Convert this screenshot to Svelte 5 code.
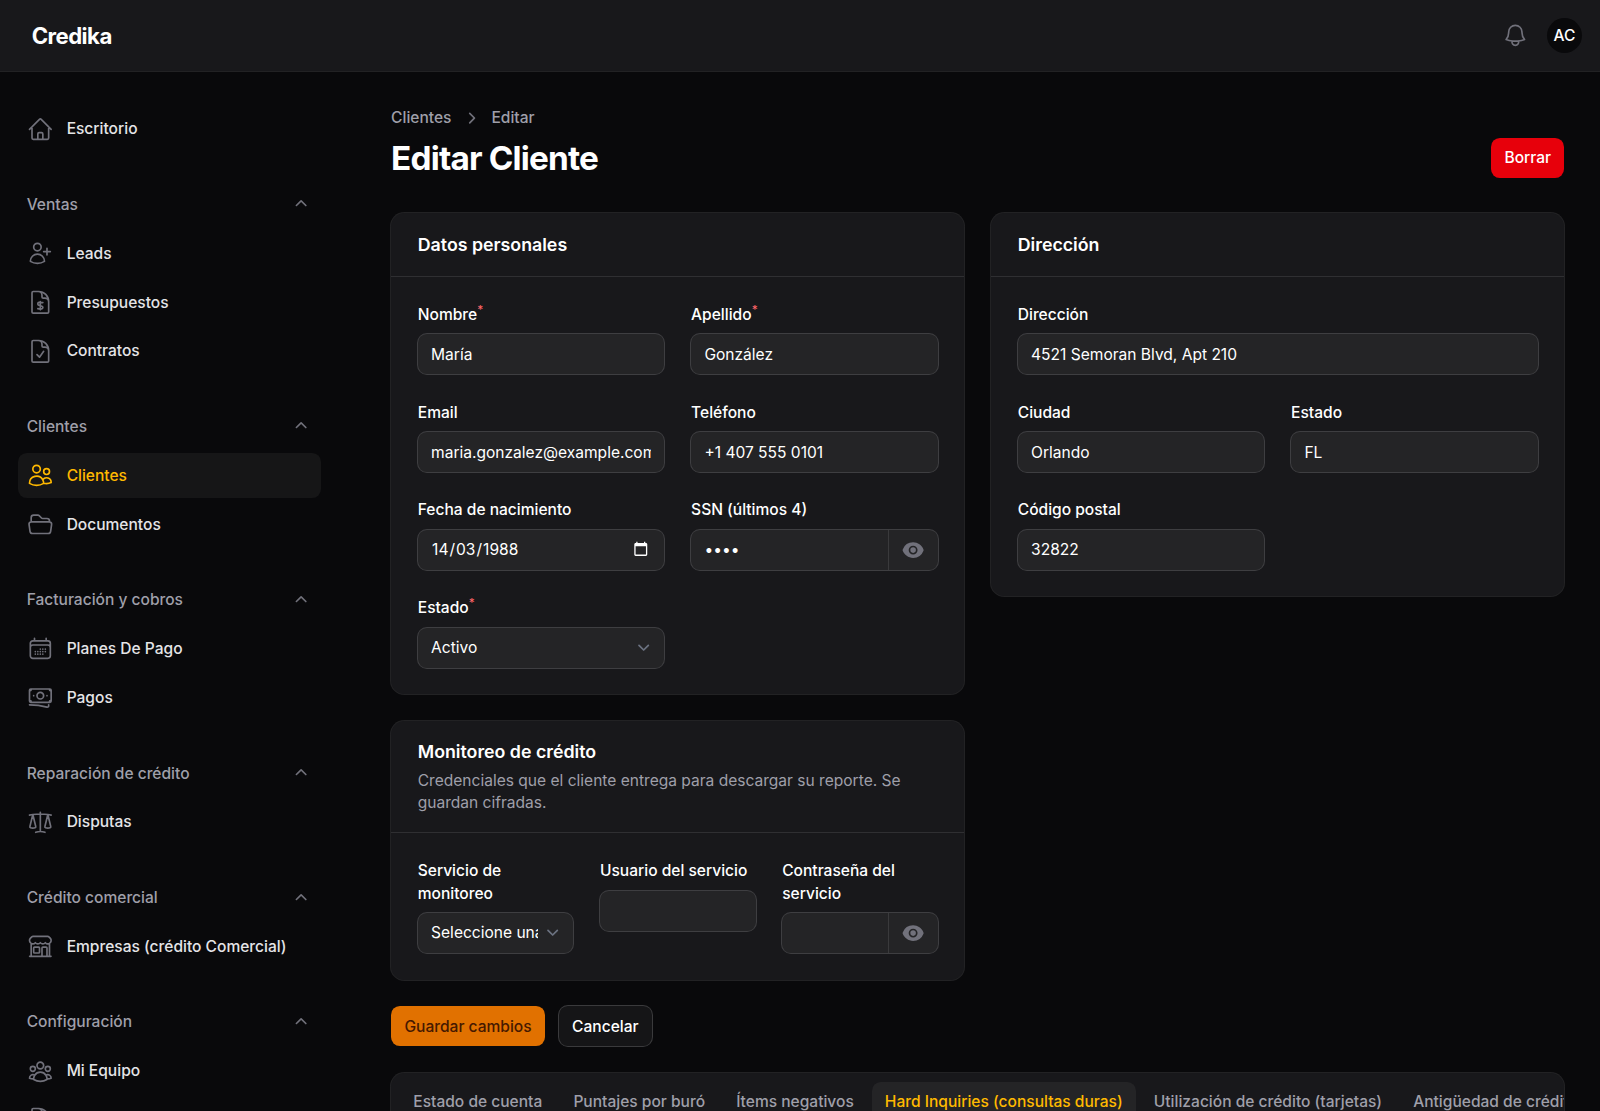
<script lang="ts">
  type Item = { label: string; icon: string; active?: boolean };
  type Group = { label?: string; items: Item[] };

  // Outline icons on a 24x24 grid
  const icons: Record<string, string> = {
    home: 'm2.25 12 8.954-8.955c.44-.439 1.152-.439 1.591 0L21.75 12M4.5 9.75v10.125c0 .621.504 1.125 1.125 1.125H9.75v-4.875c0-.621.504-1.125 1.125-1.125h2.25c.621 0 1.125.504 1.125 1.125V21h4.125c.621 0 1.125-.504 1.125-1.125V9.75M8.25 21h8.25',
    userPlus: 'M18 7.5v3m0 0v3m0-3h3m-3 0h-3m-2.25-4.125a3.375 3.375 0 1 1-6.75 0 3.375 3.375 0 0 1 6.75 0ZM3 19.235v-.11a6.375 6.375 0 0 1 12.75 0v.109A12.318 12.318 0 0 1 9.374 21c-2.331 0-4.512-.645-6.374-1.766Z',
    docDollar: 'M10.125 2.25h-4.5c-.621 0-1.125.504-1.125 1.125v17.25c0 .621.504 1.125 1.125 1.125h12.75c.621 0 1.125-.504 1.125-1.125v-9M10.125 2.25h.375a9 9 0 0 1 9 9v.375M10.125 2.25A3.375 3.375 0 0 1 13.5 5.625v1.5c0 .621.504 1.125 1.125 1.125h1.5a3.375 3.375 0 0 1 3.375 3.375M12 11.25v7.5m2.25-6.466a9.016 9.016 0 0 0-3.461-.203c-.536.072-.974.478-1.021 1.017a4.559 4.559 0 0 0-.018.402c0 .464.336.844.775.994l2.95 1.012c.44.15.775.53.775.994 0 .136-.006.27-.018.402-.047.539-.485.945-1.021 1.017a9.077 9.077 0 0 1-3.461-.203',
    docCheck: 'M10.125 2.25h-4.5c-.621 0-1.125.504-1.125 1.125v17.25c0 .621.504 1.125 1.125 1.125h12.75c.621 0 1.125-.504 1.125-1.125v-9M10.125 2.25h.375a9 9 0 0 1 9 9v.375M10.125 2.25A3.375 3.375 0 0 1 13.5 5.625v1.5c0 .621.504 1.125 1.125 1.125h1.5a3.375 3.375 0 0 1 3.375 3.375M9 15l2.25 2.25L15 12',
    docText: 'M19.5 14.25v-2.625a3.375 3.375 0 0 0-3.375-3.375h-1.5A1.125 1.125 0 0 1 13.5 7.125v-1.5a3.375 3.375 0 0 0-3.375-3.375H8.25m0 12.75h7.5m-7.5 3H12M10.5 2.25H5.625c-.621 0-1.125.504-1.125 1.125v17.25c0 .621.504 1.125 1.125 1.125h12.75c.621 0 1.125-.504 1.125-1.125V11.25a9 9 0 0 0-9-9Z',
    users: 'M15 19.128a9.38 9.38 0 0 0 2.625.372 9.337 9.337 0 0 0 4.121-.952 4.125 4.125 0 0 0-7.533-2.493M15 19.128v-.003c0-1.113-.285-2.16-.786-3.07M15 19.128v.106A12.318 12.318 0 0 1 8.624 21c-2.331 0-4.512-.645-6.374-1.766l-.001-.109a6.375 6.375 0 0 1 11.964-3.07M12 6.375a3.375 3.375 0 1 1-6.75 0 3.375 3.375 0 0 1 6.75 0Zm8.25 2.25a2.625 2.625 0 1 1-5.25 0 2.625 2.625 0 0 1 5.25 0Z',
    folder: 'M3.75 9.776c.112-.017.227-.026.344-.026h15.812c.117 0 .232.009.344.026m-16.5 0a2.25 2.25 0 0 0-1.883 2.542l.857 6a2.25 2.25 0 0 0 2.227 1.932H19.05a2.25 2.25 0 0 0 2.227-1.932l.857-6a2.25 2.25 0 0 0-1.883-2.542m-16.5 0V6A2.25 2.25 0 0 1 6 3.75h3.879a1.5 1.5 0 0 1 1.06.44l2.122 2.12a1.5 1.5 0 0 0 1.06.44H18A2.25 2.25 0 0 1 20.25 9v.776',
    calendar: 'M6.75 3v2.25M17.25 3v2.25M3 18.75V7.5a2.25 2.25 0 0 1 2.25-2.25h13.5A2.25 2.25 0 0 1 21 7.5v11.25m-18 0A2.25 2.25 0 0 0 5.25 21h13.5A2.25 2.25 0 0 0 21 18.75m-18 0v-7.5A2.25 2.25 0 0 1 5.25 9h13.5A2.25 2.25 0 0 1 21 11.25v7.5m-9-6h.008v.008H12v-.008ZM12 15h.008v.008H12V15Zm0 2.25h.008v.008H12v-.008ZM9.75 15h.008v.008H9.75V15Zm0 2.25h.008v.008H9.75v-.008ZM7.5 15h.008v.008H7.5V15Zm0 2.25h.008v.008H7.5v-.008Zm6.75-4.5h.008v.008h-.008v-.008Zm0 2.25h.008v.008h-.008V15Zm0 2.25h.008v.008h-.008v-.008Zm2.25-4.5h.008v.008H16.5v-.008Zm0 2.25h.008v.008H16.5V15Z',
    cash: 'M2.25 18.75a60.07 60.07 0 0 1 15.797 2.101c.727.198 1.453-.342 1.453-1.096V18.75M3.75 4.5v.75A.75.75 0 0 1 3 6h-.75m0 0v-.375c0-.621.504-1.125 1.125-1.125H20.25M2.25 6v9m18-10.5v.75c0 .414.336.75.75.75h.75m-1.5-1.5h.375c.621 0 1.125.504 1.125 1.125v9.75c0 .621-.504 1.125-1.125 1.125h-.375m1.5-1.5H21a.75.75 0 0 0-.75.75v.75m0 0H3.75m0 0h-.375a1.125 1.125 0 0 1-1.125-1.125V15m1.5 1.5v-.75A.75.75 0 0 0 3 15h-.75M15 10.5a3 3 0 1 1-6 0 3 3 0 0 1 6 0Zm3 0h.008v.008H18V10.5Zm-12 0h.008v.008H6V10.5Z',
    scale: 'M12 3v17.25m0 0c-1.472 0-2.882.265-4.185.75M12 20.25c1.472 0 2.882.265 4.185.75M18.75 4.97A48.416 48.416 0 0 0 12 4.5c-2.291 0-4.545.16-6.75.47m13.5 0c1.01.143 2.01.317 3 .52m-3-.52 2.62 10.726c.122.499-.106 1.028-.589 1.202a5.988 5.988 0 0 1-2.031.352 5.988 5.988 0 0 1-2.031-.352c-.483-.174-.711-.703-.59-1.202L18.75 4.971Zm-16.5.52c.99-.203 1.99-.377 3-.52m0 0 2.62 10.726c.122.499-.106 1.028-.589 1.202a5.989 5.989 0 0 1-2.031.352 5.989 5.989 0 0 1-2.031-.352c-.483-.174-.711-.703-.59-1.202L5.25 4.971Z',
    store: 'M13.5 21v-7.5a.75.75 0 0 1 .75-.75h3a.75.75 0 0 1 .75.75V21m-4.5 0H2.36m11.14 0H18m0 0h3.64m-1.39 0V9.349M3.75 21V9.349m0 0a3.001 3.001 0 0 0 3.75-.615A2.993 2.993 0 0 0 9.75 9.75c.896 0 1.7-.393 2.25-1.016a2.993 2.993 0 0 0 2.25 1.016c.896 0 1.7-.393 2.25-1.015a3.001 3.001 0 0 0 3.75.614m-16.5 0a3.004 3.004 0 0 1-.621-4.72l1.189-1.19A1.5 1.5 0 0 1 5.378 3h13.243a1.5 1.5 0 0 1 1.06.44l1.19 1.189a3 3 0 0 1-.621 4.72M6.75 18h3.75a.75.75 0 0 0 .75-.75V13.5a.75.75 0 0 0-.75-.75H6.75a.75.75 0 0 0-.75.75v3.75c0 .414.336.75.75.75Z',
    team: 'M18 18.72a9.094 9.094 0 0 0 3.741-.479 3 3 0 0 0-4.682-2.72m.94 3.198.001.031c0 .225-.012.447-.037.666A11.944 11.944 0 0 1 12 21c-2.17 0-4.207-.576-5.963-1.584A6.062 6.062 0 0 1 6 18.719m12 0a5.971 5.971 0 0 0-.941-3.197m0 0A5.995 5.995 0 0 0 12 12.75a5.995 5.995 0 0 0-5.058 2.772m0 0a3 3 0 0 0-4.681 2.72 8.986 8.986 0 0 0 3.74.477m.94-3.197a5.971 5.971 0 0 0-.94 3.197M15 6.75a3 3 0 1 1-6 0 3 3 0 0 1 6 0Zm6 3a2.25 2.25 0 1 1-4.5 0 2.25 2.25 0 0 1 4.5 0Zm-13.5 0a2.25 2.25 0 1 1-4.5 0 2.25 2.25 0 0 1 4.5 0Z',
    bell: 'M14.857 17.082a23.848 23.848 0 0 0 5.454-1.31A8.967 8.967 0 0 1 18 9.75V9A6 6 0 0 0 6 9v.75a8.967 8.967 0 0 1-2.312 6.022c1.733.64 3.56 1.085 5.455 1.31m5.714 0a24.255 24.255 0 0 1-5.714 0m5.714 0a3 3 0 1 1-5.714 0'
  };

  const nav: Group[] = [
    { items: [{ label: 'Escritorio', icon: 'home' }] },
    {
      label: 'Ventas',
      items: [
        { label: 'Leads', icon: 'userPlus' },
        { label: 'Presupuestos', icon: 'docDollar' },
        { label: 'Contratos', icon: 'docCheck' }
      ]
    },
    {
      label: 'Clientes',
      items: [
        { label: 'Clientes', icon: 'users', active: true },
        { label: 'Documentos', icon: 'folder' }
      ]
    },
    {
      label: 'Facturación y cobros',
      items: [
        { label: 'Planes De Pago', icon: 'calendar' },
        { label: 'Pagos', icon: 'cash' }
      ]
    },
    { label: 'Reparación de crédito', items: [{ label: 'Disputas', icon: 'scale' }] },
    { label: 'Crédito comercial', items: [{ label: 'Empresas (crédito Comercial)', icon: 'store' }] },
    {
      label: 'Configuración',
      items: [
        { label: 'Mi Equipo', icon: 'team' },
        { label: '', icon: 'docText' }
      ]
    }
  ];

  const tabs = [
    'Estado de cuenta',
    'Puntajes por buró',
    'Ítems negativos',
    'Hard Inquiries (consultas duras)',
    'Utilización de crédito (tarjetas)',
    'Antigüedad de crédito'
  ];
  let activeTab = $state(3);
</script>

{#snippet outline(name: string)}
  <svg class="icon" viewBox="0 0 24 24" fill="none" stroke="currentColor" stroke-width="1.5" stroke-linecap="round" stroke-linejoin="round" aria-hidden="true"><path d={icons[name]} /></svg>
{/snippet}

{#snippet text(label: string, value: string, required: boolean = false)}
  <label class="field">
    <span class="label">{label}{#if required}<sup>*</sup>{/if}</span>
    <span class="control"><input type="text" {value} /></span>
  </label>
{/snippet}

{#snippet secret(label: string, value: string)}
  <div class="field">
    <span class="label">{label}</span>
    <span class="control">
      <input type="password" {value} aria-label={label} />
      <button class="reveal" type="button" aria-label="Mostrar">
        <svg viewBox="0 0 20 20" fill="currentColor"><path d="M10 12.5a2.5 2.5 0 1 0 0-5 2.5 2.5 0 0 0 0 5Z" /><path fill-rule="evenodd" clip-rule="evenodd" d="M.664 10.59a1.651 1.651 0 0 1 0-1.186A10.004 10.004 0 0 1 10 3c4.257 0 7.893 2.66 9.336 6.41.147.381.146.804 0 1.186A10.004 10.004 0 0 1 10 17c-4.257 0-7.893-2.66-9.336-6.41ZM14 10a4 4 0 1 1-8 0 4 4 0 0 1 8 0Z" /></svg>
      </button>
    </span>
  </div>
{/snippet}

{#snippet choice(label: string, value: string, required: boolean = false)}
  <div class="field">
    <span class="label">{label}{#if required}<sup>*</sup>{/if}</span>
    <span class="control select">
      <span class="value">{value}</span>
      <svg viewBox="0 0 20 20" fill="none" stroke="#6b7280" stroke-width="1.5" stroke-linecap="round" stroke-linejoin="round"><path d="m6 8 4 4 4-4" /></svg>
    </span>
  </div>
{/snippet}

<div class="app">
  <header class="topbar">
    <div class="brand">Credika</div>
    <div class="tools">
      {@render outline('bell')}
      <div class="avatar">AC</div>
    </div>
  </header>

  <div class="body">
    <nav class="sidebar">
      {#each nav as group}
        <div class="group">
          {#if group.label}
            <div class="group-head">
              <span>{group.label}</span>
              <svg viewBox="0 0 20 20" fill="currentColor"><path d="M9.47 6.47a.75.75 0 0 1 1.06 0l4.25 4.25a.75.75 0 1 1-1.06 1.06L10 8.06l-3.72 3.72a.75.75 0 0 1-1.06-1.06l4.25-4.25Z" /></svg>
            </div>
          {/if}
          {#each group.items as item}
            <div class="item" class:active={item.active}>
              {@render outline(item.icon)}
              <span>{item.label}</span>
            </div>
          {/each}
        </div>
      {/each}
    </nav>

    <main>
      <div class="page-head">
        <div>
          <div class="crumbs">
            <span>Clientes</span>
            <svg viewBox="0 0 20 20" fill="currentColor"><path d="M8.22 5.22a.75.75 0 0 1 1.06 0l4.25 4.25a.75.75 0 0 1 0 1.06l-4.25 4.25a.75.75 0 0 1-1.06-1.06L11.94 10 8.22 6.28a.75.75 0 0 1 0-1.06Z" /></svg>
            <span>Editar</span>
          </div>
          <h1>Editar Cliente</h1>
        </div>
        <button class="btn danger" type="button">Borrar</button>
      </div>

      <form>
        <div class="cards">
          <section class="card">
            <header><h2>Datos personales</h2></header>
            <div class="fields two">
              {@render text('Nombre', 'María', true)}
              {@render text('Apellido', 'González', true)}
              {@render text('Email', 'maria.gonzalez@example.com')}
              {@render text('Teléfono', '+1 407 555 0101')}
              <div class="field">
                <span class="label">Fecha de nacimiento</span>
                <span class="control date">
                  <span class="parts"><span>14</span>/<span>03</span>/<span>1988</span></span>
                  <svg viewBox="0 0 24 24" fill="currentColor"><path d="M20 3h-1V1h-2v2H7V1H5v2H4c-1.1 0-2 .9-2 2v16c0 1.100.9 2 2 2h16c1.100 0 2-.9 2-2V5c0-1.100-.9-2-2-2zm0 18H4V8h16v13z" /></svg>
                </span>
              </div>
              {@render secret('SSN (últimos 4)', '1234')}
              {@render choice('Estado', 'Activo', true)}
            </div>
          </section>

          <section class="card">
            <header><h2>Dirección</h2></header>
            <div class="fields two">
              <div class="wide">{@render text('Dirección', '4521 Semoran Blvd, Apt 210')}</div>
              {@render text('Ciudad', 'Orlando')}
              {@render text('Estado', 'FL')}
              {@render text('Código postal', '32822')}
            </div>
          </section>

          <section class="card">
            <header>
              <h2>Monitoreo de crédito</h2>
              <p>Credenciales que el cliente entrega para descargar su reporte. Se guardan cifradas.</p>
            </header>
            <div class="fields three">
              {@render choice('Servicio de monitoreo', 'Seleccione una opción')}
              {@render text('Usuario del servicio', '')}
              {@render secret('Contraseña del servicio', '')}
            </div>
          </section>
        </div>

        <div class="actions">
          <button class="btn primary" type="button">Guardar cambios</button>
          <button class="btn plain" type="button">Cancelar</button>
        </div>
      </form>

      <div class="tabs">
        {#each tabs as tab, i}
          <button type="button" class:on={i === activeTab} onclick={() => (activeTab = i)}>{tab}</button>
        {/each}
      </div>
    </main>
  </div>
</div>

<style>
  :global(html) {
    font-size: 17.7778px;
  }
  :global(body) {
    margin: 0;
    background: #09090b;
    overflow: hidden;
  }
  .app,
  .app * {
    box-sizing: border-box;
  }
  .app {
    height: 100vh;
    overflow: hidden;
    display: flex;
    flex-direction: column;
    background: #09090b;
    color: #fff;
    font-family: Inter, 'Liberation Sans', sans-serif;
    font-size: 0.875rem;
    line-height: 1.25rem;
    -webkit-font-smoothing: antialiased;
  }
  svg {
    display: block;
    flex: none;
    width: 1.25rem;
    height: 1.25rem;
  }
  .icon {
    width: 1.5rem;
    height: 1.5rem;
    color: #71717b;
  }
  button,
  input {
    font: inherit;
    color: inherit;
    border: 0;
    margin: 0;
    background: none;
  }
  h1,
  h2,
  p {
    margin: 0;
  }

  .topbar {
    flex: none;
    height: 4rem;
    display: flex;
    align-items: center;
    justify-content: space-between;
    padding: 0 1rem 0 1.78rem;
    background: #18181b;
    box-shadow: 0 0 0 1px #222224;
  }
  .brand {
    padding-top: 1px;
    font-size: 1.25rem;
    line-height: 1.25rem;
    font-weight: 700;
    letter-spacing: -0.025em;
  }
  .tools {
    display: flex;
    align-items: center;
    gap: 1rem;
  }
  .avatar {
    width: 2rem;
    height: 2rem;
    padding-top: 1px;
    border-radius: 50%;
    background: #09090b;
    display: grid;
    place-items: center;
    font-weight: 500;
  }

  .body {
    flex: 1;
    min-height: 0;
    display: flex;
  }
  .sidebar {
    flex: none;
    width: 20rem;
    padding: 2rem 1.9375rem 0 1rem;
    display: flex;
    flex-direction: column;
    gap: 1.75rem;
    overflow: hidden;
    font-weight: 500;
  }
  .group {
    flex: none;
    display: flex;
    flex-direction: column;
    gap: 0.25rem;
  }
  .group-head {
    height: 2.5rem;
    padding: 0 0.5rem;
    display: flex;
    align-items: center;
    justify-content: space-between;
    color: #9f9fa9;
  }
  .group-head span,
  .item span {
    padding-top: 1px;
  }
  .group-head svg {
    color: #71717b;
  }
  .item {
    height: 2.5rem;
    padding: 0 0.5rem;
    display: flex;
    align-items: center;
    gap: 0.75rem;
    border-radius: 0.5rem;
    color: #e4e4e7;
  }
  .item.active {
    background: #161617;
    color: #ffb900;
  }
  .item.active .icon {
    color: #ffb900;
  }

  main {
    flex: 1;
    min-width: 0;
    padding: 2rem 2rem 0;
    display: flex;
    flex-direction: column;
  }
  .page-head {
    flex: none;
    display: flex;
    justify-content: space-between;
    align-items: flex-end;
    margin-bottom: 2rem;
  }
  .crumbs {
    height: 1.25rem;
    display: flex;
    align-items: center;
    gap: 0.5rem;
    margin-bottom: 0.5rem;
    font-weight: 500;
    color: #9f9fa9;
  }
  .crumbs span {
    padding-top: 1px;
  }
  .crumbs svg {
    color: #71717b;
  }
  h1 {
    font-size: 1.875rem;
    line-height: 2.25rem;
    font-weight: 700;
    letter-spacing: -0.025em;
  }

  .btn {
    height: 2.25rem;
    padding: 1px 0.75rem 0;
    border-radius: 0.5rem;
    font-weight: 500;
    white-space: nowrap;
  }
  .danger {
    background: #e7000b;
  }
  .primary {
    background: #e17100;
    color: #461901;
  }
  .plain {
    background: #151517;
    box-shadow: 0 0 0 1px #3a3a3c;
  }

  form {
    flex: none;
    display: flex;
    flex-direction: column;
    gap: 1.5rem;
    margin-bottom: 1.5rem;
  }
  .cards {
    display: grid;
    grid-template-columns: 1fr 1fr;
    gap: 1.5rem;
    align-items: start;
  }
  .card {
    min-width: 0;
    border-radius: 0.75rem;
    background: #18181b;
    box-shadow: 0 0 0 1px #222224;
  }
  .card header {
    padding: 1rem 1.5rem;
  }
  h2 {
    padding-top: 0.5px;
    margin-bottom: -0.5px;
    font-size: 1rem;
    line-height: 1.5rem;
    font-weight: 600;
  }
  .card p {
    padding-top: 0.5px;
    margin-top: 0.25rem;
    margin-bottom: -0.5px;
    color: #9f9fa9;
  }
  .fields {
    display: grid;
    gap: 1.5rem;
    align-items: start;
    padding: 1.5rem;
    border-top: 1px solid #2f2f32;
  }
  .two {
    grid-template-columns: repeat(2, minmax(0, 1fr));
  }
  .three {
    grid-template-columns: repeat(3, minmax(0, 1fr));
  }
  .wide {
    grid-column: 1 / -1;
  }
  .field {
    display: flex;
    flex-direction: column;
    gap: 0.5rem;
    min-width: 0;
  }
  .label {
    padding-top: 0.8px;
    margin-bottom: -0.8px;
    font-weight: 500;
  }
  sup {
    font-size: 75%;
    line-height: 0;
    vertical-align: baseline;
    position: relative;
    top: -0.5em;
    color: #ff6467;
  }
  .control {
    height: 2.25rem;
    display: flex;
    align-items: center;
    border-radius: 0.5rem;
    background: #242426;
    box-shadow: 0 0 0 1px #3e3e41;
  }
  .control input {
    flex: 1;
    min-width: 0;
    width: 100%;
    height: 100%;
    padding: 0.4px 0.75rem 0;
    outline: none;
  }
  .select {
    padding: 0 0.5rem 0 0.75rem;
    justify-content: space-between;
  }
  .select .value {
    flex: 1;
    min-width: 0;
    padding-top: 1px;
    overflow: hidden;
    white-space: nowrap;
    margin-right: 0.1875rem;
  }
  .select svg {
    width: 1.3125rem;
    height: 1.3125rem;
  }
  .date {
    padding: 0 0.87rem 0 0.75rem;
    justify-content: space-between;
  }
  .date svg {
    width: 0.875rem;
    height: 0.875rem;
    margin-bottom: 1px;
  }
  .parts {
    padding-top: 1px;
  }
  .parts span {
    padding: 0 1px;
  }
  .reveal {
    flex: none;
    width: 2.8125rem;
    height: 100%;
    padding: 0;
    display: grid;
    place-items: center;
    border-left: 1px solid #3a3a3c;
    color: #71717b;
  }

  .actions {
    display: flex;
    gap: 0.78rem;
  }
  .tabs {
    flex: none;
    display: flex;
    gap: 0.25rem;
    padding: 0.5rem;
    overflow: hidden;
    border-radius: 0.75rem;
    background: #18181b;
    box-shadow: 0 0 0 1px #222224;
  }
  .tabs button {
    flex: none;
    padding: calc(0.5rem + 0.6px) 0.75rem 0.5rem;
    border-radius: 0.5rem;
    font-weight: 500;
    white-space: nowrap;
    color: #9f9fa9;
  }
  .tabs .on {
    background: #242426;
    color: #ffb900;
  }
</style>
